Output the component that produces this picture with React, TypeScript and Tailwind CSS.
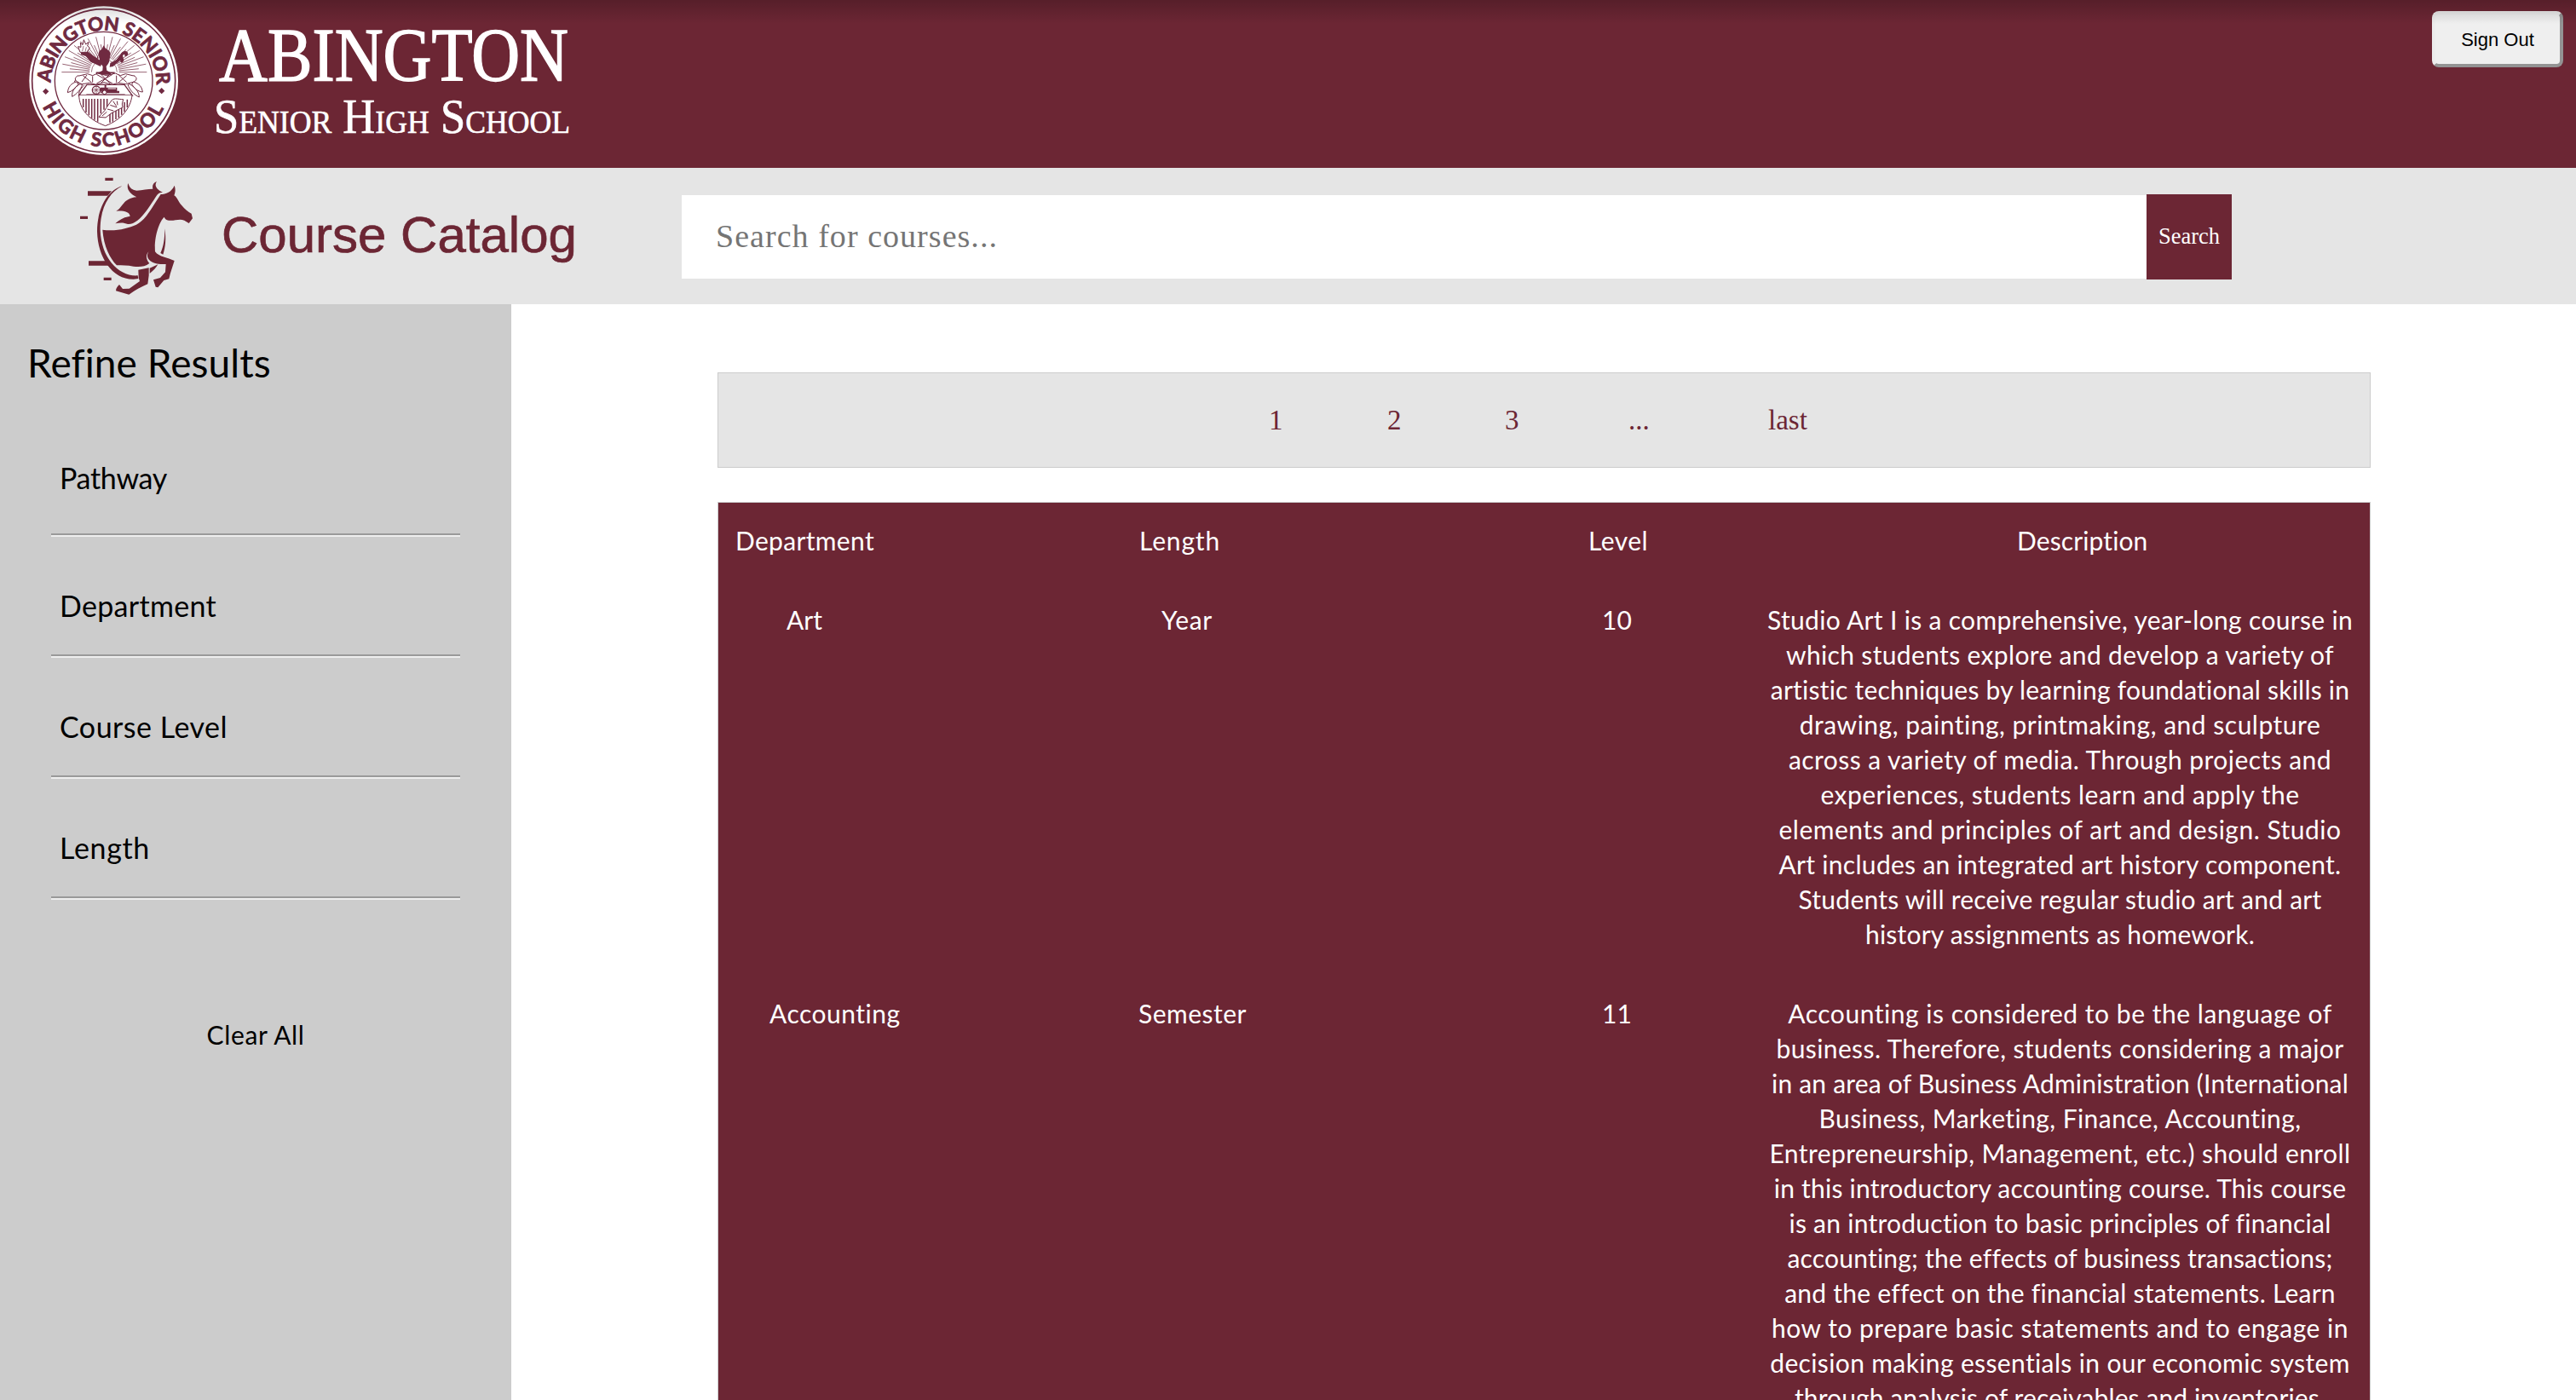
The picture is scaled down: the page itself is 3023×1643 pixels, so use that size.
import { useLayoutEffect, useRef, useState } from "react";

/* One line of text whose tracking is adjusted so that it spans `width` pixels. */
function Line({ children, width, className = "" }: { children: string; width: number; className?: string }) {
  const ref = useRef<HTMLSpanElement>(null);
  const [tracking, setTracking] = useState(0);
  useLayoutEffect(() => {
    if (!ref.current) return;
    const natural = ref.current.getBoundingClientRect().width;
    setTracking((width - natural) / children.length);
  }, [children, width]);
  return (
    <span ref={ref} className={"inline-block whitespace-nowrap " + className} style={{ letterSpacing: tracking }}>
      {children}
    </span>
  );
}

const RAYS = Array.from({ length: 33 }, (_, i) => {
  const a = Math.PI + (Math.PI * i) / 32;
  const outer = i % 2 ? 122 : 150;
  return {
    x1: 307 + 52 * Math.cos(a),
    y1: 254 + 52 * Math.sin(a),
    x2: 307 + outer * Math.cos(a),
    y2: 254 + (outer - 24 * Math.abs(Math.sin(a))) * Math.sin(a),
  };
});

function Seal() {
  return (
    <svg viewBox="0 0 600 585" className="ml-5 h-[195px] w-[200px] shrink-0" fill="none" stroke="#702a41">
      <circle cx="305" cy="284" r="262" fill="#fff" stroke="none" />
      <circle cx="305" cy="284" r="252" strokeWidth="5" />
      <circle cx="305" cy="284" r="172" strokeWidth="4" />
      <path id="sealTop" d="M119 293 A186 186 0 0 1 491 293" stroke="none" />
      <path id="sealBottom" d="M90 373 A233 233 0 0 0 520 373" stroke="none" />
      <g fill="#702a41" stroke="#702a41" strokeWidth="2.5" fontFamily="Lato, sans-serif" fontWeight="700" fontSize="67">
        <text>
          <textPath href="#sealTop" startOffset="2" textLength="588" lengthAdjust="spacing">ABINGTON SENIOR</textPath>
        </text>
        <text>
          <textPath href="#sealBottom" startOffset="2" textLength="536" lengthAdjust="spacing">HIGH SCHOOL</textPath>
        </text>
      </g>
      <path d="M101 311l11 11-11 11-11-11zM509 309l11 11-11 11-11-11z" fill="#702a41" stroke="none" />

      {/* sunburst */}
      <g strokeWidth="2.2">
        {RAYS.map((r, i) => (
          <line key={i} {...r} />
        ))}
      </g>
      <path d="M262 254a45 45 0 0 1 90 0" fill="#fff" strokeWidth="2" />

      {/* cup, torch and scroll */}
      <g fill="#702a41" stroke="none">
        <path d="M305 160l5 8 6 6c10 4 14 10 12 22l-4 22c-3 8-8 12-10 16l2 14 14 8v7h-43v-7l14-8 1-14c-4-6-8-10-10-18l-5-26c0-8 4-14 11-16z" />
        <path d="M226 184l24-2 18 14 32 22-6 16-34-16-18-20-18-6z" />
        <path d="M328 222l22-12 14-18c5-12 18-16 25-8 5 8-2 16-10 13 2-6-4-8-7-2l2 10c4 8 2 14-6 16-6-4-4-9-4-9l-26 22-12 2z" />
      </g>
      <path d="M222 184l-7-20 10 2-2-16 8 8 4-18 7 16 10-8-4 14 8 6-10 16z" fill="#fff" strokeWidth="3" />
      <path d="M230 180l4-18M240 182l4-16" strokeWidth="2" />
      <path d="M287 194c-7 8-4 22 8 26" strokeWidth="3" />

      {/* ribbon and wheat */}
      <g fill="#fff" strokeWidth="3">
        <path d="M214 268l34-8 18 6 18-8 32 8 30-8 18 8 18-6 32 8-2 20-30 8-26-4-22 6-28-8-28 8-22-6-26 4-28-8z" />
        <path d="M216 266c-16 6-14 20 2 24M410 266c16 6 12 20-4 24" />
        <path d="M208 288c-18 6-28 18-30 38 16-4 28-16 38-30zM222 296c-20 10-30 26-28 44 18-10 30-24 36-42zM236 300c-12 12-20 24-18 38M410 288c20 6 30 18 32 36-18-2-30-14-38-28zM396 296c18 10 34 26 34 46-18-8-34-26-40-44z" />
        <path d="M280 262l56 32M336 262l-56 32M294 260l34 34M328 260l-34 34M232 266l30 24M246 264l-18 24M358 264l28 26M386 266l-28 24M266 268v22M350 266v24" />
      </g>
      <path d="M278 256h66" strokeWidth="5" />

      {/* shield */}
      <path d="M246 298h132l28 38H218z" fill="#fff" strokeWidth="4" />
      <path d="M218 336c2 46 30 84 93 107 58-22 88-62 94-107" fill="#fff" strokeWidth="3" />
      <path
        d="M233 348v30M243 348v48M253 348v58M263 348v68M273 348v74M284 348v80M295 348v52M306 348v38M317 348v28M327 400v32M337 392v36M348 384v36M358 376v38M368 376v28M378 360v34M388 350v28"
        strokeWidth="4.5"
      />
      <path d="M288 412c8-12 20-18 26-32l20-28c10-8 24-2 40-2l-4 16 2 12-24 12-18 10-18 14z" fill="#fff" strokeWidth="3" />
      <path d="M318 384l22 6M328 370l24 8M338 356l12 18M352 356l2 14M300 408l16-14" strokeWidth="3" />
      <circle cx="279" cy="317" r="14" strokeWidth="4" />
      <path d="M265 317h28M279 303v28M269 307l20 20M289 307l-20 20" strokeWidth="2" />
      <path d="M294 308h14v-8h6v8h38v12h-58zM296 320h64v8h-66z" fill="#702a41" stroke="none" />
      <path d="M320 312h28" stroke="#fff" strokeWidth="3" />
      <circle cx="308" cy="325" r="7" strokeWidth="3" fill="#fff" />
      <path d="M244 332h136" strokeWidth="2" />
    </svg>
  );
}

function Wordmark() {
  return (
    <svg
      viewBox="0 0 480 197"
      className="h-[197px] w-[480px] shrink-0 overflow-visible"
      fill="#fff"
      stroke="#fff"
      fontFamily="'Liberation Serif', serif"
    >
      <text x="37" y="93.5" fontSize="89" strokeWidth="1.4" textLength="410" lengthAdjust="spacingAndGlyphs">
        ABINGTON
      </text>
      <text x="31" y="156" fontSize="56" strokeWidth="0.6" textLength="418" lengthAdjust="spacingAndGlyphs">
        S<tspan fontSize="38">ENIOR</tspan> H<tspan fontSize="38">IGH</tspan> S<tspan fontSize="38">CHOOL</tspan>
      </text>
    </svg>
  );
}

function Horse() {
  return (
    <svg viewBox="0 0 600 480" className="ml-[60px] h-[160px] w-[200px] shrink-0" fill="#6c2634">
      <g transform="translate(0 -21)">
        <path d="M190 56h28v10h-28zM129 103h84l-14 16h-70zM102 191h27v10h-27zM132 349h60l12 16h-72zM185 407h27v10h-27z" />
        <path d="M250 85C200 100 162 160 162 245C164 335 215 414 290 413L307 411L305 400C240 405 176 340 173 240C172 165 203 108 250 85Z" />
        <path d="M271 75C277 92 284 99 301 101C322 99 340 95 358 95C355 82 360 73 372 69C363 80 368 96 393 107C378 108 374 114 368 124C350 152 330 186 304 206C292 215 281 220 270 219C256 213 243 213 226 217C240 204 257 194 278 191C276 176 256 171 229 173C252 163 252 128 301 124C277 111 264 96 271 75Z" />
        <path d="M181 239C230 245 270 234 300 221C334 204 355 160 386 114C404 114 424 106 434 83C439 96 437 108 433 118C446 126 448 142 459 152C470 166 483 176 494 182L498 199L485 216L469 206C451 199 432 209 414 206C405 205 401 201 398 194C382 209 362 262 366 316C380 335 410 337 434 348C428 368 420 388 415 412L397 417L376 442L368 440L360 415L384 408L402 388L404 360C378 362 350 356 341 339C337 330 339 323 344 316C332 326 334 345 346 357C330 369 312 371 290 368C268 364 250 365 231 364C208 340 185 298 181 239Z" />
        <path d="M400 235C405 270 403 300 394 326L385 321C396 298 400 270 400 235Z" />
        <path d="M347 374L376 361C370 372 360 383 347 393Z" />
        <path d="M307 380L344 373V400L340 430C316 440 296 452 274 467L228 454C228 444 234 438 240 432L252 447L275 446L312 420L308 408Z" />
      </g>
    </svg>
  );
}

const FILTERS = [
  { label: "Pathway", width: 126, above: "pt-[85px]", below: "mt-[45px]" },
  { label: "Department", width: 184, above: "pt-[61px]", below: "mt-[37px]" },
  { label: "Course Level", width: 197, above: "pt-[61px]", below: "mt-[37px]" },
  { label: "Length", width: 106, above: "pt-[61px]", below: "mt-[37px]" },
];

const ART: [string, number][] = [
  ["Studio Art I is a comprehensive, year-long course in", 687],
  ["which students explore and develop a variety of", 643],
  ["artistic techniques by learning foundational skills in", 681],
  ["drawing, painting, printmaking, and sculpture", 612],
  ["across a variety of media. Through projects and", 637],
  ["experiences, students learn and apply the", 562],
  ["elements and principles of art and design. Studio", 660],
  ["Art includes an integrated art history component.", 660],
  ["Students will receive regular studio art and art", 614],
  ["history assignments as homework.", 457],
];

const ACCOUNTING: [string, number][] = [
  ["Accounting is considered to be the language of", 639],
  ["business. Therefore, students considering a major", 666],
  ["in an area of Business Administration (International", 678],
  ["Business, Marketing, Finance, Accounting,", 567],
  ["Entrepreneurship, Management, etc.) should enroll", 682],
  ["in this introductory accounting course. This course", 672],
  ["is an introduction to basic principles of financial", 636],
  ["accounting; the effects of business transactions;", 640],
  ["and the effect on the financial statements. Learn", 645],
  ["how to prepare basic statements and to engage in", 677],
  ["decision making essentials in our economic system", 681],
  ["through analysis of receivables and inventories.", 623],
];

function Description({ lines }: { lines: [string, number][] }) {
  return (
    <div className="flex w-[687px] flex-col items-center">
      {lines.map(([text, width]) => (
        <Line key={text} width={width}>
          {text}
        </Line>
      ))}
    </div>
  );
}

export default function App() {
  return (
    <div className="relative flex h-[1643px] w-[3023px] flex-col overflow-hidden bg-white font-['Lato',sans-serif] text-black">
      <header className="flex h-[197px] shrink-0 items-start bg-[#6c2634]">
        <Seal />
        <Wordmark />
        <button className="mt-[13px] mr-[15px] ml-auto h-[66px] w-[154px] rounded-lg border-4 border-t-[#ececec] border-r-[#939393] border-b-[#939393] border-l-[#ececec] bg-[#efefef] font-['Liberation_Sans',sans-serif] text-[22px]">
          Sign Out
        </button>
      </header>

      <div className="flex h-[160px] shrink-0 items-center bg-[#e5e5e5]">
        <Horse />
        <h1 className="w-[540px] pb-[3px] font-['Liberation_Sans',sans-serif] text-[60px] leading-[68px] text-[#6c2634] [-webkit-text-stroke:0.7px_#6c2634]">
          Course Catalog
        </h1>
        <div className="mt-[2px] flex items-center">
          <div className="flex h-[98px] w-[1719px] items-center bg-white pb-px pl-[40px] font-['Liberation_Serif',serif] text-[38px] text-[#757575]">
            <Line width={331}>Search for courses...</Line>
          </div>
          <button className="h-[100px] w-[100px] bg-[#6c2634] font-['Liberation_Serif',serif] text-[26.5px] text-white">
            Search
          </button>
        </div>
      </div>

      <div className="flex grow">
        <aside className="flex w-[600px] shrink-0 flex-col bg-[#cccccc]">
          <h2 className="pt-[39px] pl-[32px] text-[46px] leading-[60px]">
            <Line width={285}>Refine Results</Line>
          </h2>
          <div className="flex flex-col px-[60px]">
            {FILTERS.map((f) => (
              <div key={f.label} className={"flex flex-col " + f.above}>
                <div className="pl-[10px] text-[34px] leading-[40px]">
                  <Line width={f.width}>{f.label}</Line>
                </div>
                <div className={"h-[4px] border-t-2 border-b-2 border-t-[#999] border-b-[#eee] " + f.below} />
              </div>
            ))}
          </div>
          <div className="pt-[138px] text-center text-[30px] leading-[41px]">
            <Line width={115}>Clear All</Line>
          </div>
        </aside>

        <main className="flex grow flex-col pt-[80px] pl-[242px]">
          <nav className="flex h-[112px] w-[1940px] items-center border border-[#ccc] bg-[#e5e5e5] pl-[646px] font-['Liberation_Serif',serif] text-[33px] leading-[40px] text-[#6c2634]">
            <span className="w-[139px]">1</span>
            <span className="w-[138px]">2</span>
            <span className="w-[145px]">3</span>
            <span className="w-[164px]">...</span>
            <span>last</span>
          </nav>

          <section className="mt-[40px] flex w-[1940px] grow flex-col gap-[52px] border border-b-0 border-[#ccc] bg-[#6c2634] pt-[24px] text-[30px] leading-[41px] text-white">
            <div className="flex items-start">
              <div className="w-[475px] pl-[20px]">
                <Line width={163}>Department</Line>
              </div>
              <div className="w-[528px] pl-[19px]">
                <Line width={95}>Length</Line>
              </div>
              <div className="w-[503px] pl-[18px]">
                <Line width={70}>Level</Line>
              </div>
              <div className="pl-[18px]">
                <Line width={154}>Description</Line>
              </div>
            </div>
            <div className="flex items-start">
              <div className="w-[520px] pl-[80px]">
                <Line width={42}>Art</Line>
              </div>
              <div className="w-[501px]">
                <Line width={60}>Year</Line>
              </div>
              <div className="w-[210px] pl-[16px]">
                <Line width={35}>10</Line>
              </div>
              <Description lines={ART} />
            </div>
            <div className="flex h-0 grow items-start">
              <div className="w-[493px] pl-[60px]">
                <Line width={154}>Accounting</Line>
              </div>
              <div className="w-[528px]">
                <Line width={127}>Semester</Line>
              </div>
              <div className="w-[210px] pl-[16px]">
                <Line width={35}>11</Line>
              </div>
              <Description lines={ACCOUNTING} />
            </div>
          </section>
        </main>
      </div>

      {/* shade along the top edge of the window */}
      <div className="pointer-events-none absolute inset-x-0 top-0 h-[28px] bg-gradient-to-b from-black/20 to-transparent" />
    </div>
  );
}
